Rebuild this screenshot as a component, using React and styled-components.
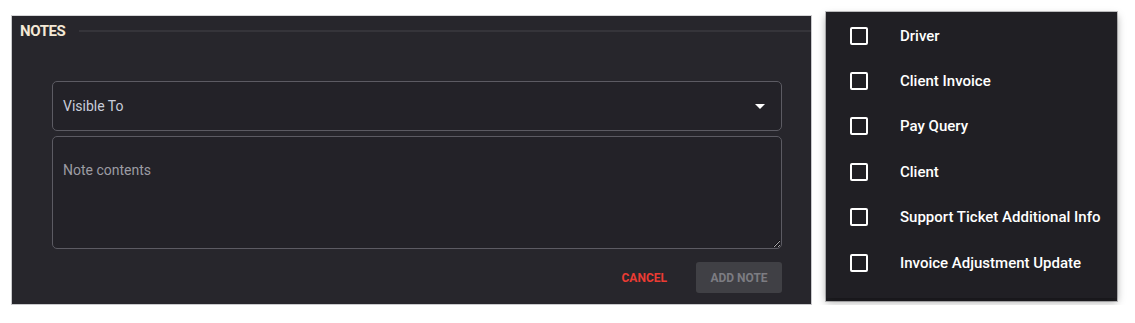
import React from "react";
import styled, { createGlobalStyle } from "styled-components";

const Global = createGlobalStyle`
  html, body { margin: 0; padding: 0; background: #ffffff; }
  body { font-family: Roboto, "Liberation Sans", sans-serif; }
  * { box-sizing: border-box; }
`;

const Page = styled.div`
  display: flex;
  align-items: flex-start;
  gap: 13px;
  padding: 11px 0 0 11px;
`;

const NotesPanel = styled.section`
  margin-top: 4px;
  width: 801px;
  height: 290px;
  background: #27262c;
  border: 1px solid #c9c9cc;
  border-top-color: #d6d6d8;
  display: flex;
  flex-direction: column;
`;

const Legend = styled.div`
  display: flex;
  align-items: center;
  gap: 14px;
  height: 30px;
  padding: 0 0 0 8px;
`;

const LegendText = styled.span`
  font-weight: 700;
  font-size: 15px;
  letter-spacing: -0.4px;
  color: #f4e8d6;
`;

const LegendLine = styled.span`
  flex: 1;
  height: 2px;
  background: #35343a;
`;

const Form = styled.div`
  display: flex;
  flex-direction: column;
  gap: 5px;
  padding: 35px 29px 0 40px;
`;

const SelectBox = styled.div`
  height: 50px;
  border: 1px solid #5c5b63;
  border-radius: 5px;
  background: #232228;
  display: flex;
  align-items: center;
  justify-content: space-between;
  padding: 0 16px 0 10px;
  font-size: 14px;
  color: #c8cddb;
`;

const Caret = styled.span`
  width: 0;
  height: 0;
  border-left: 5px solid transparent;
  border-right: 5px solid transparent;
  border-top: 5px solid #ffffff;
  margin-top: 1px;
`;

const NoteArea = styled.textarea`
  height: 113px;
  border: 1px solid #5c5b63;
  border-radius: 5px;
  background: #232228;
  padding: 25px 10px;
  font-family: Roboto, "Liberation Sans", sans-serif;
  font-size: 14px;
  color: #e0e0e0;
  outline: none;
  resize: vertical;
  color-scheme: dark;
  &::placeholder { color: #9c9ca3; }
`;

const Actions = styled.div`
  display: flex;
  justify-content: flex-end;
  align-items: center;
  gap: 17px;
  margin-top: 8px;
`;

const TextButton = styled.button`
  background: none;
  border: none;
  padding: 8px 12px;
  font-family: Roboto, "Liberation Sans", sans-serif;
  font-weight: 700;
  font-size: 12px;
  color: #ec3b33;
`;

const FilledButton = styled.button`
  width: 86px;
  height: 31px;
  border: none;
  border-radius: 3px;
  background: #404045;
  font-family: Roboto, "Liberation Sans", sans-serif;
  font-weight: 700;
  font-size: 12px;
  color: #7c7c82;
`;

const MenuPanel = styled.section`
  width: 293px;
  height: 291px;
  background: #222126;
  border: 1px solid #c4c4c6;
  padding: 0 0 8px 0;
`;

const MenuList = styled.ul`
  list-style: none;
  margin: 0;
  padding: 1px 0 13px 0;
  background: #201f24;
  box-shadow: 0 4px 8px rgba(0, 0, 0, 0.35);
`;

const MenuItem = styled.li`
  height: 45.4px;
  display: flex;
  align-items: center;
  padding-left: 24px;
  gap: 32px;
  font-size: 15px;
  font-weight: 500;
  color: #ffffff;
`;

const Box = styled.span`
  width: 18px;
  height: 18px;
  border: 2px solid #ffffff;
  border-radius: 2px;
  flex: none;
`;

const items = [
  "Driver",
  "Client Invoice",
  "Pay Query",
  "Client",
  "Support Ticket Additional Info",
  "Invoice Adjustment Update",
];

export default function App() {
  return (
    <>
      <Global />
      <Page>
        <NotesPanel>
          <Legend>
            <LegendText>NOTES</LegendText>
            <LegendLine />
          </Legend>
          <Form>
            <SelectBox>
              <span>Visible To</span>
              <Caret />
            </SelectBox>
            <NoteArea placeholder="Note contents" />
            <Actions>
              <TextButton>CANCEL</TextButton>
              <FilledButton>ADD NOTE</FilledButton>
            </Actions>
          </Form>
        </NotesPanel>
        <MenuPanel>
          <MenuList>
            {items.map((t) => (
              <MenuItem key={t}>
                <Box />
                <span>{t}</span>
              </MenuItem>
            ))}
          </MenuList>
        </MenuPanel>
      </Page>
    </>
  );
}
